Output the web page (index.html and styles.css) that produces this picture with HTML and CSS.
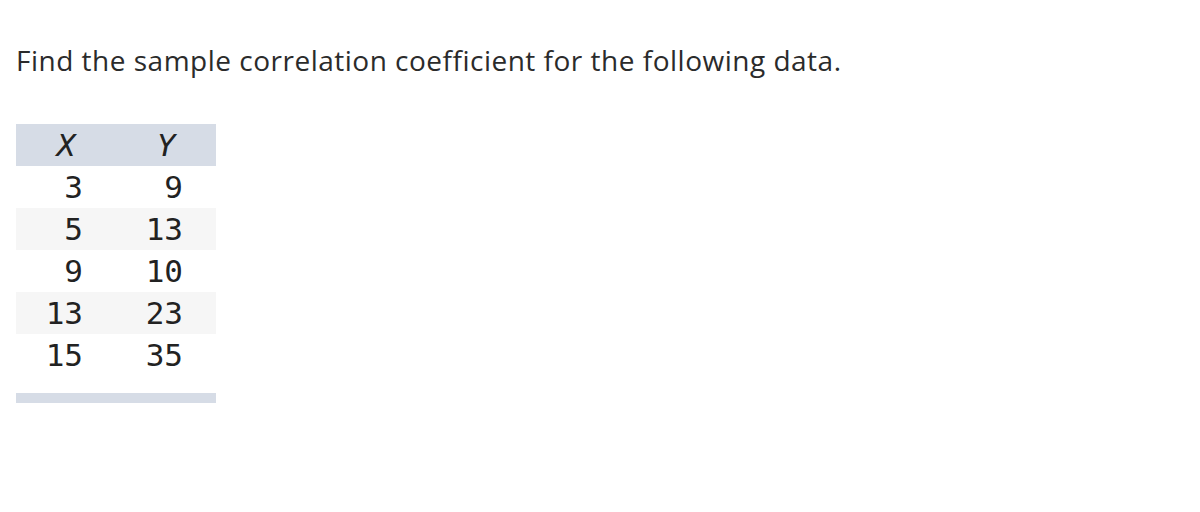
FILE: index.html
```html
<!DOCTYPE html>
<html>
<head>
<meta charset="utf-8">
<link rel="stylesheet" href="styles.css">
</head>
<body>
<div class="question">
  <p class="prompt">Find the sample correlation coefficient for the following data.</p>
  <table class="data">
    <thead>
      <tr><th>X</th><th>Y</th></tr>
    </thead>
    <tbody>
      <tr><td>3</td><td>9</td></tr>
      <tr class="alt"><td>5</td><td>13</td></tr>
      <tr><td>9</td><td>10</td></tr>
      <tr class="alt"><td>13</td><td>23</td></tr>
      <tr><td>15</td><td>35</td></tr>
    </tbody>
  </table>
  <div class="table-foot"></div>
</div>
</body>
</html>
```
FILE: styles.css
```css
html, body {
  margin: 0;
  padding: 0;
  background: #ffffff;
}
.question {
  padding: 40px 16px 0 16px;
}
.prompt {
  margin: 0;
  font-family: "Open Sans", "Lato", sans-serif;
  font-size: 28px;
  line-height: 40px;
  letter-spacing: 0.5px;
  color: #2b2b2b;
}
.data {
  margin-top: 44px;
  border-collapse: collapse;
  width: 200px;
  font-family: "DejaVu Sans Mono", monospace;
  font-size: 31px;
  color: #222222;
}
.data th {
  background: #d6dce6;
  height: 42px;
  padding: 0;
  font-weight: normal;
  font-style: italic;
  text-align: center;
  width: 100px;
}
.data td {
  height: 42px;
  padding: 0 33px 0 0;
  text-align: right;
}
.data tr.alt td {
  background: #f6f6f6;
}
.table-foot {
  margin-top: 17px;
  width: 200px;
  height: 10px;
  background: #d6dce6;
}
```
